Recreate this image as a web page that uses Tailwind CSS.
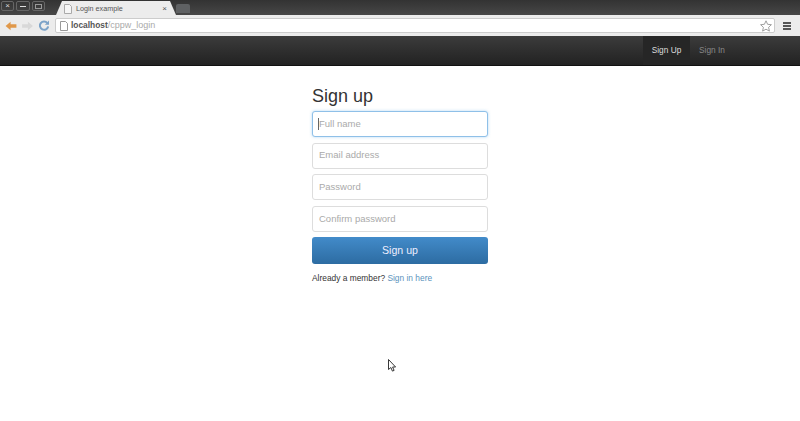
<!DOCTYPE html>
<html lang="en">
<head>
  <meta charset="UTF-8" />
  <title>Login example</title>
  <script src="https://cdn.jsdelivr.net/npm/@tailwindcss/browser@4"></script>
</head>
<body class="relative h-[421px] w-[800px] overflow-hidden bg-white font-['Liberation_Sans',sans-serif]">

  <!-- browser tabs -->
  <div class="flex h-[15px] items-end bg-gradient-to-b from-[#333] to-[#474747]">
    <div class="flex h-[12px] self-start pl-[1px] pt-[1px]">
      <div class="flex h-[10px] w-[13px] items-center justify-center rounded-[2px] border border-[#666] text-[8px] leading-none text-[#ddd]">×</div>
      <div class="ml-[2px] flex h-[10px] w-[14px] items-center justify-center rounded-[2px] border border-[#666]"><div class="h-[1px] w-[6px] bg-[#ddd]"></div></div>
      <div class="ml-[2px] flex h-[10px] w-[13px] items-center justify-center rounded-[2px] border border-[#666]"><div class="h-[5px] w-[7px] border border-[#999]"></div></div>
    </div>
    <div class="ml-[11px] flex h-[14px] w-[120px] items-center bg-[#ececec] pl-[8px] pr-[9px] pt-[1px] [clip-path:polygon(0_100%,5%_0,95%_0,100%_100%)]">
      <svg class="h-[10px] w-[8px] shrink-0" viewBox="0 0 8 10"><path d="M.5.5h5l2 2v7h-7z" fill="#f6f6f6" stroke="#aaa"/></svg>
      <span class="ml-[4px] text-[7.2px] leading-none text-[#555]">Login example</span>
      <span class="ml-auto text-[8px] leading-none text-[#555]">×</span>
    </div>
    <div class="mb-[2px] h-[9px] w-[14px] rounded-t-[2px] bg-[#5f6163]"></div>
  </div>

  <!-- browser toolbar -->
  <div class="flex h-[21px] items-center bg-[#ececec] pl-[5px] pr-[9px]">
    <svg class="h-[10px] w-[12px]" viewBox="0 0 13 12"><path d="M0 6l6-5v3h7v4H6v3z" fill="#e0984a"/></svg>
    <svg class="ml-[5px] h-[10px] w-[11px]" viewBox="0 0 13 12"><path d="M13 6L7 1v3H0v4h7v3z" fill="#d8d8d8"/></svg>
    <svg class="ml-[6px] h-[11px] w-[10px]" viewBox="0 0 12 12"><path d="M10 3a5 5 0 1 0 1 4" fill="none" stroke="#7ba2c8" stroke-width="2.4"/><path d="M7 5h5V0z" fill="#7ba2c8"/></svg>
    <div class="ml-[6px] flex h-[15px] w-[720px] items-center rounded-[2px] border border-[#ccc] bg-white pl-[4px] pr-[2px]">
      <svg class="h-[10px] w-[8px] shrink-0" viewBox="0 0 8 10"><path d="M.5.5h5l2 2v7h-7z" fill="#fff" stroke="#999"/></svg>
      <span class="ml-[3px] text-[8.4px] leading-none font-bold text-[#555]">localhost<span class="text-[9px] font-normal text-[#aaa]">/cppw_login</span></span>
      <svg class="ml-auto h-[12px] w-[12px]" viewBox="0 0 12 12"><path d="M6 .8l1.6 3.5 3.8.4-2.8 2.6.8 3.8L6 9.2l-3.4 1.9.8-3.8L.6 4.7l3.8-.4z" fill="#fff" stroke="#888" stroke-width=".8"/></svg>
    </div>
    <div class="ml-auto flex w-[8px] flex-col gap-[1px]">
      <div class="h-[2px] bg-[#555]"></div>
      <div class="h-[2px] bg-[#555]"></div>
      <div class="h-[2px] bg-[#555]"></div>
    </div>
  </div>

  <!-- page navbar -->
  <nav class="flex h-[30px] justify-end border-b border-[#111] bg-gradient-to-b from-[#3c3c3c] to-[#222] pr-[66px]">
    <a class="flex w-[47px] items-center justify-center bg-[#262626] text-[8.3px] text-[#ddd]">Sign Up</a>
    <a class="flex w-[44px] items-center justify-center text-[8.3px] text-[#888]">Sign In</a>
  </nav>

  <!-- signup form -->
  <main class="mx-auto w-[176px] pt-[19px]">
    <h2 class="text-[18px] leading-[22px] text-[#333]">Sign up</h2>
    <div class="mt-[4px] flex flex-col gap-[5.6px]">
      <div class="relative flex h-[26px] items-center rounded-[3px] border border-[#8fc0e8] bg-white pl-[6px] text-[9.5px] text-[#aaa] shadow-[0_0_3px_rgba(102,175,233,.5)]">
        <span class="absolute left-[5px] h-[12px] w-[1px] bg-[#666]"></span>Full name
      </div>
      <div class="flex h-[26px] items-center rounded-[3px] border border-[#ddd] bg-white pl-[6px] text-[9.5px] text-[#aaa]">Email address</div>
      <div class="flex h-[26px] items-center rounded-[3px] border border-[#ddd] bg-white pl-[6px] text-[9.5px] text-[#aaa]">Password</div>
      <div class="flex h-[26px] items-center rounded-[3px] border border-[#ddd] bg-white pl-[6px] text-[9.5px] text-[#aaa]">Confirm password</div>
      <button class="flex h-[26.5px] items-center justify-center rounded-[3px] bg-gradient-to-b from-[#428bca] to-[#2d6ca2] text-[10.6px] text-[#eef]">Sign up</button>
    </div>
    <p class="mt-[9px] text-[8.4px] leading-[11px] text-[#333]">Already a member? <a class="text-[#5a93bd]">Sign in here</a></p>
  </main>

  <!-- mouse pointer -->
  <svg class="absolute left-[388px] top-[359px] h-[13px] w-[9px]" viewBox="0 0 9 13"><path d="M.5.5v10l2.4-2 1.5 3.6 1.7-.7-1.5-3.4h3z" fill="#fff" stroke="#222" stroke-width=".9"/></svg>

</body>
</html>
